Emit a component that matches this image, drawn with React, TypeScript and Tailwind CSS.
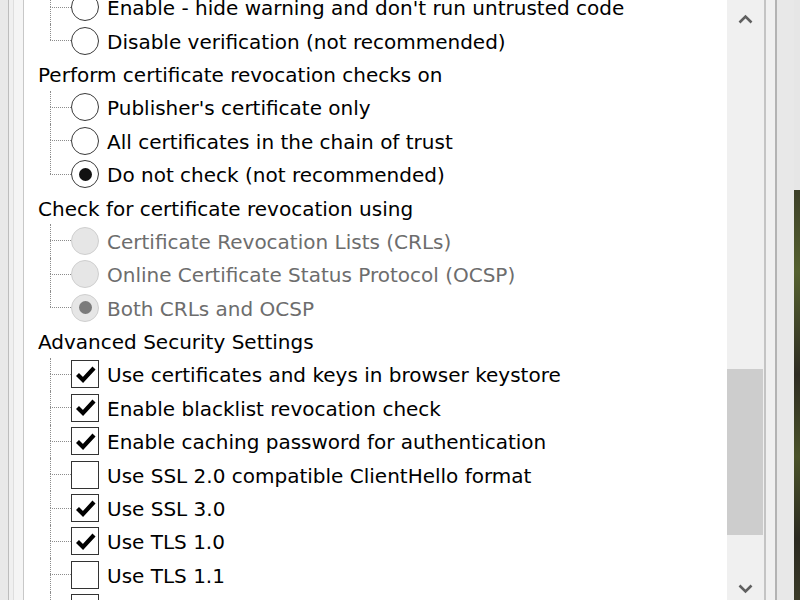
import React from "react";

type Item =
  | { kind: "header"; text: string }
  | {
      kind: "radio" | "check";
      text: string;
      checked?: boolean;
      disabled?: boolean;
      last?: boolean;
    };

const items: Item[] = [
  { kind: "radio", text: "Enable - hide warning and don't run untrusted code" },
  { kind: "radio", text: "Disable verification (not recommended)", last: true },
  { kind: "header", text: "Perform certificate revocation checks on" },
  { kind: "radio", text: "Publisher's certificate only" },
  { kind: "radio", text: "All certificates in the chain of trust" },
  { kind: "radio", text: "Do not check (not recommended)", checked: true, last: true },
  { kind: "header", text: "Check for certificate revocation using" },
  { kind: "radio", text: "Certificate Revocation Lists (CRLs)", disabled: true },
  { kind: "radio", text: "Online Certificate Status Protocol (OCSP)", disabled: true },
  { kind: "radio", text: "Both CRLs and OCSP", disabled: true, checked: true, last: true },
  { kind: "header", text: "Advanced Security Settings" },
  { kind: "check", text: "Use certificates and keys in browser keystore", checked: true },
  { kind: "check", text: "Enable blacklist revocation check", checked: true },
  { kind: "check", text: "Enable caching password for authentication", checked: true },
  { kind: "check", text: "Use SSL 2.0 compatible ClientHello format" },
  { kind: "check", text: "Use SSL 3.0", checked: true },
  { kind: "check", text: "Use TLS 1.0", checked: true },
  { kind: "check", text: "Use TLS 1.1" },
  { kind: "check", text: "" },
];

function Radio({ checked, disabled }: { checked?: boolean; disabled?: boolean }) {
  return (
    <div
      className={
        disabled
          ? "w-[28px] h-[28px] rounded-full border-[1.5px] border-[#cfcfcf] bg-[#e6e6e6] flex items-center justify-center shrink-0"
          : "w-[28px] h-[28px] rounded-full border-[1.5px] border-[#3a3a3a] bg-white flex items-center justify-center shrink-0"
      }
    >
      {checked &&
        (disabled ? (
          <div className="w-[13px] h-[13px] rounded-full bg-[#7b7b7b]" />
        ) : (
          <div className="w-[13px] h-[13px] rounded-full bg-[#111111]" />
        ))}
    </div>
  );
}

function Check({ checked }: { checked?: boolean }) {
  return (
    <div className="w-[28px] h-[28px] border-[1.5px] border-[#333333] bg-white shrink-0 flex items-center justify-center">
      {checked && (
        <svg width="25" height="25" viewBox="0 0 25 25">
          <polyline
            points="4.5,12.5 10,18 21,6"
            fill="none"
            stroke="#000"
            strokeWidth="4.2"
            strokeLinejoin="miter"
          />
        </svg>
      )}
    </div>
  );
}

function Row({ item }: { item: Item }) {
  if (item.kind === "header") {
    return (
      <div className="h-[33.4px] flex items-center pl-[14px]">
        <span className="pt-[2px] text-[#000000] whitespace-nowrap">{item.text}</span>
      </div>
    );
  }
  return (
    <div className="h-[33.4px] flex items-stretch pl-[26px]">
      <div className="w-[21px] flex flex-col shrink-0">
        <div className="flex-1 border-l border-dotted border-[#8c8c8c]" />
        <div
          className={
            item.last
              ? "flex-1 border-t border-dotted border-[#8c8c8c]"
              : "flex-1 border-t border-l border-dotted border-[#8c8c8c]"
          }
        />
      </div>
      <div className="flex items-center">
        {item.kind === "radio" ? (
          <Radio checked={item.checked} disabled={item.disabled} />
        ) : (
          <Check checked={item.checked} />
        )}
      </div>
      {item.text && (
        <div className="flex items-center pl-[8px]">
          <span
            className={
              item.disabled
                ? "pt-[2px] text-[#6d6d6d] whitespace-nowrap"
                : "pt-[2px] text-[#000000] whitespace-nowrap"
            }
          >
            {item.text}
          </span>
        </div>
      )}
    </div>
  );
}

export default function App() {
  return (
    <div className="w-[800px] h-[600px] overflow-hidden flex bg-white font-['DejaVu_Sans',sans-serif] text-[20px] leading-[20px]">
      {/* left frame */}
      <div className="flex shrink-0 h-full">
        <div className="w-[8px] bg-[#e9e9e9]" />
        <div className="w-[1px] bg-[#bdbdbd]" />
        <div className="w-[4px] bg-[#f0f0f0]" />
        <div className="w-[1px] bg-[#dedede]" />
        <div className="w-[9px] bg-[#f5f5f5]" />
        <div className="w-[1px] bg-[#c8c8c8]" />
      </div>

      {/* content */}
      <div className="flex-1 h-full overflow-hidden bg-white">
        <div className="-mt-[9.5px] flex flex-col">
          {items.map((it, i) => (
            <Row key={i} item={it} />
          ))}
        </div>
      </div>

      {/* scrollbar */}
      <div className="w-[37px] shrink-0 h-full bg-[#f0f0f0] flex flex-col">
        <div className="h-[38px] flex items-center justify-center">
          <svg width="15" height="10" viewBox="0 0 15 10">
            <polyline points="1.5,8.5 7.5,2.5 13.5,8.5" fill="none" stroke="#606060" strokeWidth="2.6" />
          </svg>
        </div>
        <div className="h-[331px]" />
        <div className="h-[166px] w-[36px] bg-[#cdcdcd]" />
        <div className="flex-1 flex flex-col justify-end">
          <div className="h-[22px] flex items-center justify-center">
            <svg width="15" height="10" viewBox="0 0 15 10">
              <polyline points="1.5,1.5 7.5,7.5 13.5,1.5" fill="none" stroke="#606060" strokeWidth="2.6" />
            </svg>
          </div>
        </div>
      </div>

      {/* right frame */}
      <div className="flex shrink-0 h-full">
        <div className="w-[2px] bg-[#c4c4c4]" />
        <div className="w-[9px] bg-[#f0f0f0]" />
        <div className="w-[2px] bg-[#b3b3b3]" />
        <div className="w-[17px] bg-[#e8e8e8]" />
        <div className="w-[6px] flex flex-col">
          <div className="h-[190px] bg-[#e6e6e6]" />
          <div className="flex-1 bg-[linear-gradient(180deg,#3d4028_0%,#55612f_20%,#2e2c22_45%,#4a5229_65%,#2b2a20_85%,#3a3a28_100%)]" />
        </div>
      </div>
    </div>
  );
}
